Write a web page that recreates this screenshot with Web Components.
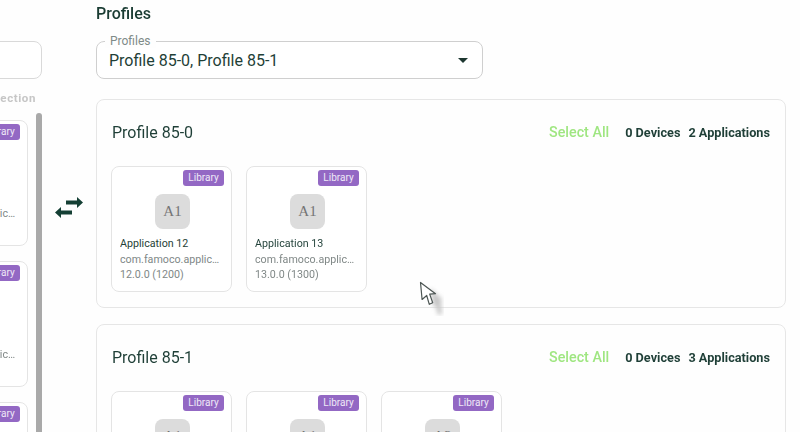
<!DOCTYPE html>
<html>
<head>
<meta charset="utf-8">
<title>Profiles</title>
<style>
  html, body { margin: 0; height: 100%; overflow: hidden; background: #fefefe; }
  body { font-family: Roboto, sans-serif; color: #1d3d35; }
</style>
</head>
<body>
<profiles-page>
  <selection-panel slot="left">
    <app-card name="Application 10" pkg="com.famoco.application10" version="10.0.0 (1000)" icon="A1"></app-card>
    <app-card name="Application 11" pkg="com.famoco.application11" version="11.0.0 (1100)" icon="A1"></app-card>
    <app-card name="Application 12" pkg="com.famoco.application12" version="12.0.0 (1200)" icon="A1"></app-card>
  </selection-panel>
  <swap-icon slot="middle"></swap-icon>
  <div slot="right">
    <profile-select label="Profiles" value="Profile 85-0, Profile 85-1"></profile-select>
    <profile-panel heading="Profile 85-0" devices="0 Devices" applications="2 Applications">
      <app-card name="Application 12" pkg="com.famoco.application12" version="12.0.0 (1200)" icon="A1"></app-card>
      <app-card name="Application 13" pkg="com.famoco.application13" version="13.0.0 (1300)" icon="A1"></app-card>
    </profile-panel>
    <profile-panel heading="Profile 85-1" devices="0 Devices" applications="3 Applications">
      <app-card name="Application 10" pkg="com.famoco.application10" version="10.0.0 (1000)" icon="A1"></app-card>
      <app-card name="Application 11" pkg="com.famoco.application11" version="11.0.0 (1100)" icon="A1"></app-card>
      <app-card name="Application 12" pkg="com.famoco.application12" version="12.0.0 (1200)" icon="A2"></app-card>
    </profile-panel>
  </div>
  <mouse-cursor slot="overlay"></mouse-cursor>
</profiles-page>

<script>
class ProfilesPage extends HTMLElement {
  constructor() {
    super();
    this.attachShadow({ mode: 'open' });
  }

  connectedCallback() {
    this.shadowRoot.innerHTML = `
      <style>
        :host {
          display: flex;
          position: relative;
          width: 800px;
          height: 432px;
          overflow: hidden;
          align-items: flex-start;
          filter: blur(0.3px);
        }

        .left {
          flex: none;
          width: 300px;
          margin-left: -258px;
          padding-top: 41px;
        }

        .middle {
          flex: none;
          width: 54px;
          height: 414px;
          display: flex;
          align-items: center;
          justify-content: center;
        }

        .right {
          flex: none;
          width: 690px;
        }

        h2 {
          margin: 6px 0 19px;
          height: 16px;
          font-size: 16px;
          line-height: 16px;
          font-weight: 500;
          color: #1a3c33;
        }
      </style>
      <div class="left"><slot name="left"></slot></div>
      <div class="middle"><slot name="middle"></slot></div>
      <div class="right">
        <h2>Profiles</h2>
        <slot name="right"></slot>
      </div>
      <slot name="overlay"></slot>
    `;
  }
}
customElements.define('profiles-page', ProfilesPage);

class SelectionPanel extends HTMLElement {
  constructor() {
    super();
    this.attachShadow({ mode: 'open' });
  }

  connectedCallback() {
    this.shadowRoot.innerHTML = `
      <style>
        :host {
          display: block;
        }

        .search {
          height: 36px;
          border: 1px solid #d9d9d9;
          border-radius: 8px;
          background: #fff;
        }

        .caption {
          margin: 12px 6px 8px 0;
          text-align: right;
          font-size: 11.5px;
          line-height: 14px;
          font-weight: 700;
          letter-spacing: 0.6px;
          color: #c6c6c6;
        }

        .body {
          display: flex;
          height: 320px;
        }

        .list {
          flex: 1;
          display: flex;
          flex-direction: column;
          align-items: flex-end;
          gap: 15px;
          padding: 7px 8px 0 0;
          overflow: hidden;
        }

        .bar {
          flex: none;
          width: 6px;
          background: #a9a9a9;
          border-radius: 3px 3px 0 0;
        }
      </style>
      <div class="search"></div>
      <div class="caption">Selection</div>
      <div class="body">
        <div class="list"><slot></slot></div>
        <div class="bar"></div>
      </div>
    `;
  }
}
customElements.define('selection-panel', SelectionPanel);

class SwapIcon extends HTMLElement {
  constructor() {
    super();
    this.attachShadow({ mode: 'open' });
  }

  connectedCallback() {
    this.shadowRoot.innerHTML = `
      <style>
        :host {
          display: block;
          width: 28px;
          height: 22px;
        }

        svg {
          display: block;
          fill: #143f34;
        }
      </style>
      <svg width="28" height="22" viewBox="0 0 28 22">
        <path d="M11 4.5h11V1l6 5.5-6 5.5V8.5H11z"></path>
        <path d="M17 14.5H6V11l-6 5.5L6 22v-3.5h11z"></path>
      </svg>
    `;
  }
}
customElements.define('swap-icon', SwapIcon);

class ProfileSelect extends HTMLElement {
  constructor() {
    super();
    this.attachShadow({ mode: 'open' });
  }

  connectedCallback() {
    this.shadowRoot.innerHTML = `
      <style>
        :host {
          display: block;
          position: relative;
          box-sizing: border-box;
          width: 387px;
          height: 38px;
          margin-bottom: 20px;
          padding: 0 14px 0 12px;
          border: 1px solid #cfcfcf;
          border-radius: 8px;
          background: #fff;
        }

        .label {
          position: absolute;
          top: -8px;
          left: 8px;
          padding: 0 5px;
          background: #fefefe;
          font-size: 12px;
          line-height: 14px;
          color: #7f8b88;
        }

        .value {
          display: flex;
          align-items: center;
          justify-content: space-between;
          height: 36px;
          padding-top: 1px;
          box-sizing: border-box;
          font-size: 16px;
          color: #1f3f37;
        }

        .arrow {
          width: 0;
          height: 0;
          border: 5px solid transparent;
          border-top-color: #1d3730;
          border-bottom: 0;
        }
      </style>
      <span class="label">${this.getAttribute('label')}</span>
      <div class="value">
        <span>${this.getAttribute('value')}</span>
        <span class="arrow"></span>
      </div>
    `;
  }
}
customElements.define('profile-select', ProfileSelect);

class ProfilePanel extends HTMLElement {
  constructor() {
    super();
    this.attachShadow({ mode: 'open' });
  }

  connectedCallback() {
    this.shadowRoot.innerHTML = `
      <style>
        :host {
          display: block;
          box-sizing: border-box;
          height: 209px;
          margin-bottom: 16px;
          padding: 0 15px 0 14px;
          border: 1px solid #e6e6e6;
          border-radius: 8px;
          background: #fefefe;
        }

        header {
          display: flex;
          align-items: center;
          box-sizing: border-box;
          height: 66px;
          padding-bottom: 2px;
        }

        h3 {
          flex: 1;
          margin: 0 0 0 1px;
          font-size: 16px;
          font-weight: 400;
          color: #1f3f37;
        }

        .select-all {
          margin-right: 8px;
          font-size: 14.3px;
          font-weight: 500;
          color: #9fe681;
        }

        .count {
          margin-left: 8px;
          font-size: 12.7px;
          font-weight: 700;
          color: #1f3f37;
        }

        .apps {
          display: flex;
          gap: 14px;
        }
      </style>
      <header>
        <h3>${this.getAttribute('heading')}</h3>
        <span class="select-all">Select All</span>
        <span class="count">${this.getAttribute('devices')}</span>
        <span class="count">${this.getAttribute('applications')}</span>
      </header>
      <div class="apps"><slot></slot></div>
    `;
  }
}
customElements.define('profile-panel', ProfilePanel);

class AppCard extends HTMLElement {
  constructor() {
    super();
    this.attachShadow({ mode: 'open' });
  }

  connectedCallback() {
    this.shadowRoot.innerHTML = `
      <style>
        :host {
          display: block;
          position: relative;
          flex: none;
          box-sizing: border-box;
          width: 121px;
          height: 126px;
          padding: 27px 8px 0;
          border: 1px solid #e4e4e4;
          border-radius: 8px;
          background: #fff;
        }

        .badge {
          position: absolute;
          top: 3px;
          right: 7px;
          width: 41px;
          height: 16px;
          border-radius: 3px;
          background: #9368c4;
          text-align: center;
          font-size: 10px;
          line-height: 15px;
          color: #efe8f7;
        }

        .icon {
          display: flex;
          align-items: center;
          justify-content: center;
          width: 35px;
          height: 35px;
          margin: 0 0 7px 35px;
          border-radius: 8px;
          background: #dcdcdc;
          font-family: "Liberation Serif", serif;
          font-size: 15px;
          color: #757575;
        }

        .line {
          overflow: hidden;
          white-space: nowrap;
          text-overflow: ellipsis;
          font-size: 10.7px;
          line-height: 15.5px;
          color: #808887;
        }

        .name {
          color: #1f3f37;
        }
      </style>
      <span class="badge">Library</span>
      <div class="icon">${this.getAttribute('icon')}</div>
      <div class="line name">${this.getAttribute('name')}</div>
      <div class="line">${this.getAttribute('pkg')}</div>
      <div class="line">${this.getAttribute('version')}</div>
    `;
  }
}
customElements.define('app-card', AppCard);

class MouseCursor extends HTMLElement {
  constructor() {
    super();
    this.attachShadow({ mode: 'open' });
  }

  connectedCallback() {
    this.shadowRoot.innerHTML = `
      <style>
        :host {
          display: block;
          position: absolute;
          left: 418px;
          top: 280px;
          width: 30px;
          height: 36px;
        }

        svg {
          display: block;
        }
      </style>
      <svg width="30" height="36" viewBox="0 0 30 36">
        <defs><filter id="soft"><feGaussianBlur stdDeviation="2"></feGaussianBlur></filter></defs>
        <path d="M12 8l3 17 3 2 2 8 4-1-1-12 1-3z" fill="#c8c8c8" filter="url(#soft)"></path>
        <path d="M2.5 2.5l1.6 17 4.6-4 2.6 8.8 3.4-1.6-3-8.6 5.8-.4z" fill="#fff" stroke="#4c5553" stroke-width="1.2" stroke-linejoin="round"></path>
      </svg>
    `;
  }
}
customElements.define('mouse-cursor', MouseCursor);
</script>
</body>
</html>
